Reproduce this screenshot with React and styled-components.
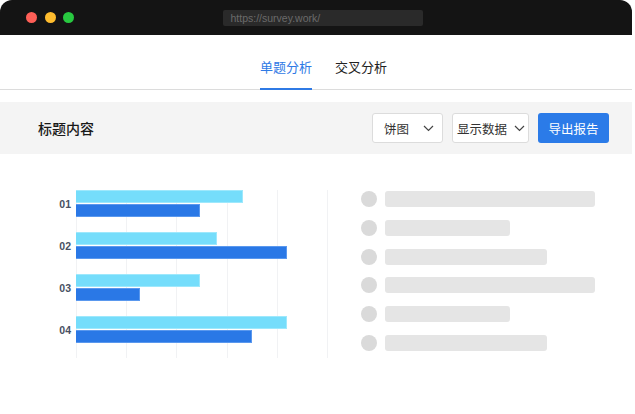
import styled, { createGlobalStyle } from 'styled-components';

const GlobalStyle = createGlobalStyle`
  * { box-sizing: border-box; }
  body {
    margin: 0;
    background: #fff;
    font-family: "Noto Sans CJK SC", "Noto Sans", sans-serif;
  }
`;

const Frame = styled.div`
  width: 632px;
  height: 414px;
  background: #fff;
`;

const TitleBar = styled.div`
  height: 35px;
  background: #141414;
  border-radius: 12px 12px 0 0;
  display: flex;
  align-items: center;
  padding-left: 26px;
`;

const Dot = styled.span`
  width: 11px;
  height: 11px;
  border-radius: 50%;
  background: ${p => p.$color};
  margin-right: 7.5px;
`;

const UrlBar = styled.div`
  margin-left: 141px;
  width: 200px;
  height: 16px;
  border-radius: 2px;
  background: #2a2a2a;
  color: #6a6a6a;
  font-family: "Liberation Sans", Arial, sans-serif;
  font-size: 10.5px;
  line-height: 16px;
  padding-left: 8px;
`;

const Tabs = styled.nav`
  height: 55px;
  display: flex;
  align-items: flex-end;
  gap: 23px;
  padding-left: 260px;
  border-bottom: 1px solid #dcdcdc;
`;

const Tab = styled.div`
  font-size: 13px;
  line-height: 18px;
  padding-bottom: 12px;
  margin-bottom: -1px;
  color: ${p => (p.$active ? '#2f7ae5' : '#222')};
  border-bottom: 2px solid ${p => (p.$active ? '#2f7ae5' : 'transparent')};
`;

const Toolbar = styled.div`
  margin-top: 12px;
  height: 52px;
  background: #f4f4f4;
  display: flex;
  align-items: center;
  padding: 0 23px 0 38px;
`;

const ToolbarTitle = styled.div`
  flex: 1;
  font-size: 14px;
  font-weight: 500;
  color: #1a1a1a;
`;

const Select = styled.div`
  width: ${p => p.$w}px;
  height: 30px;
  margin-right: 9px;
  background: #fff;
  border: 1px solid #dcdcdc;
  border-radius: 3px;
  display: flex;
  align-items: center;
  justify-content: space-between;
  padding: 0 ${p => p.$pr}px 0 ${p => p.$pl}px;
  font-size: 12.5px;
  color: #333;
`;

const Button = styled.button`
  width: 71px;
  height: 30px;
  border: none;
  border-radius: 3px;
  background: #2b7be8;
  color: #fff;
  font-family: inherit;
  font-size: 12.5px;
`;

const Content = styled.div`
  display: flex;
  padding: 36px 0 0 40px;
`;

const Labels = styled.div`
  width: 31px;
  margin-right: 5px;
  display: flex;
  flex-direction: column;
  gap: 15px;
`;

const Label = styled.div`
  height: 27px;
  display: flex;
  align-items: center;
  justify-content: flex-end;
  font-family: "Liberation Sans", Arial, sans-serif;
  font-weight: 700;
  font-size: 10.5px;
  color: #485163;
`;

const Plot = styled.div`
  width: 253px;
  height: 168px;
  padding-bottom: 14px;
  display: flex;
  flex-direction: column;
  gap: 15px;
  background-image: repeating-linear-gradient(
    to right,
    #f1f2f4 0,
    #f1f2f4 1px,
    transparent 1px,
    transparent 50.2px
  );
`;

const Group = styled.div`
  display: flex;
  flex-direction: column;
  gap: 1px;
`;

const Bar = styled.div`
  height: 13px;
  background: ${p => (p.$dark ? '#2a78e6' : '#75ddfb')};
  border: 1px solid ${p => (p.$dark ? '#5a98ee' : '#9ee8fc')};
  border-left: none;
`;

const List = styled.div`
  margin-left: 32px;
  margin-top: 1px;
  display: flex;
  flex-direction: column;
  gap: 12.8px;
`;

const Row = styled.div`
  display: flex;
  align-items: center;
  gap: 8px;
`;

const Circle = styled.span`
  width: 16px;
  height: 16px;
  border-radius: 50%;
  background: #dadada;
`;

const Line = styled.span`
  height: 16px;
  border-radius: 3px;
  background: #e5e5e5;
`;

const Chevron = () => (
  <svg width="11" height="7" viewBox="0 0 11 7">
    <polyline points="1,1 5.5,5.5 10,1" fill="none" stroke="#444" strokeWidth="1.2" />
  </svg>
);

const groups = [
  { label: '01', light: 167, dark: 124 },
  { label: '02', light: 141, dark: 211 },
  { label: '03', light: 124, dark: 64 },
  { label: '04', light: 211, dark: 176 },
];

const rows = [210, 125, 162, 210, 125, 162];

export default function App() {
  return (
    <Frame>
      <GlobalStyle />
      <TitleBar>
        <Dot $color="#fe5f57" />
        <Dot $color="#febc2e" />
        <Dot $color="#28c840" />
        <UrlBar>https://survey.work/</UrlBar>
      </TitleBar>
      <Tabs>
        <Tab $active>单题分析</Tab>
        <Tab>交叉分析</Tab>
      </Tabs>
      <Toolbar>
        <ToolbarTitle>标题内容</ToolbarTitle>
        <Select $w={71} $pl={11} $pr={8}>
          饼图
          <Chevron />
        </Select>
        <Select $w={77} $pl={4} $pr={3}>
          显示数据
          <Chevron />
        </Select>
        <Button>导出报告</Button>
      </Toolbar>
      <Content>
        <Labels>
          {groups.map(g => (
            <Label key={g.label}>{g.label}</Label>
          ))}
        </Labels>
        <Plot>
          {groups.map(g => (
            <Group key={g.label}>
              <Bar style={{ width: g.light }} />
              <Bar $dark style={{ width: g.dark }} />
            </Group>
          ))}
        </Plot>
        <List>
          {rows.map((w, i) => (
            <Row key={i}>
              <Circle />
              <Line style={{ width: w }} />
            </Row>
          ))}
        </List>
      </Content>
    </Frame>
  );
}
